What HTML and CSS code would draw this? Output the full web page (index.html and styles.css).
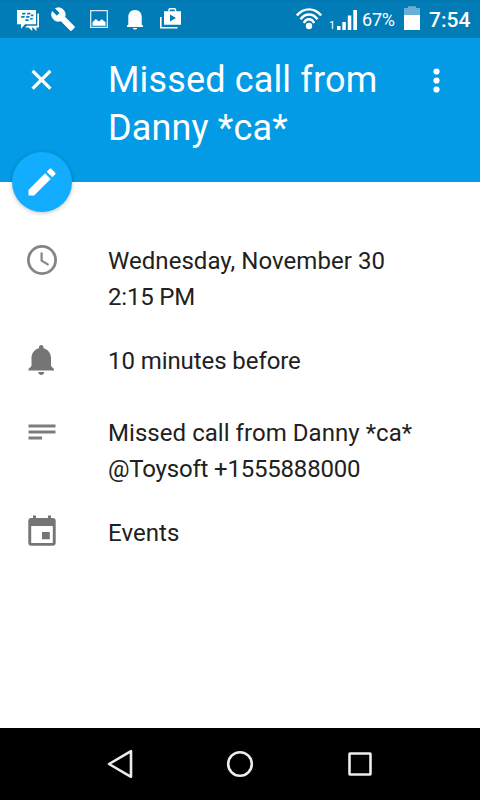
FILE: index.html
```html
<!DOCTYPE html>
<html lang="en">
<head>
    <meta charset="UTF-8">
    <meta name="viewport" content="width=device-width, initial-scale=1.0">
    <title>Missed call from Danny *ca*</title>
    <link rel="stylesheet" href="styles.css">
</head>
<body>
    <div class="screen">
        <div class="status-bar">
            <div class="notifications">
                <svg width="36" height="38" viewBox="0 0 36 38">
                    <path fill="#fff" d="M28.300 13.500h1.700V27.500h-2.500V31l-3.700-3.500h-.6V31l-3.700-3.500h-3.500l2-1.700h10.300z"/>
                    <path fill="#fff" d="M8 10h19v14.300H16L12 28.700v-4.400H8z"/>
                    <g fill="#027cb7">
                        <path d="M13.300 12.800h3.400l-.4 1.700h-3.400zM18.400 12.800h3.200l-.4 1.700h-3.200zM12.400 16h3.400l-.4 1.700H12zM17.400 16h3.200l-.4 1.700H17zM22 14.500h2.600l-.4 1.700h-2.600zM21.300 17.900h2.700l-.4 1.700h-2.700zM16.600 19.300h3.200l-.4 1.700h-3.200z"/>
                    </g>
                </svg>
                <svg width="36" height="38" viewBox="0 0 36 38">
                    <path fill="#fff" stroke="#fff" stroke-width=".8" transform="translate(5.600 6.700) scale(1.040)" d="M22.700 19l-9.100-9.100c.9-2.300.4-5-1.500-6.900-2-2-5-2.400-7.400-1.300L9 6 6 9 1.600 4.700C.4 7.100.9 10.100 2.900 12.100c1.900 1.900 4.600 2.400 6.900 1.500l9.100 9.100c.4.4 1 .4 1.400 0l2.300-2.300c.5-.4.5-1.100.1-1.400z"/>
                </svg>
                <svg width="36" height="38" viewBox="0 0 36 38">
                    <path fill="none" stroke="#d6ebf5" stroke-width="1.300" d="M9.700 10.700h16.600v16.600H9.700z"/>
                    <path fill="#fff" d="M11.500 25.700v-3.500l3.300-3.200 3 2.500 3-2.200 3.800 3v3.400z"/>
                </svg>
                <svg width="36" height="38" viewBox="0 0 36 38">
                    <path fill="#fff" d="M18 10c-4.500 0-6.700 3.300-6.700 7v7.500l-1.300 1.300v1.200h16v-1.200l-1.300-1.300V17c0-3.700-2.200-7-6.700-7zM15.800 27.900h4.400q-.4 1.600-2.200 1.600t-2.200-1.600z"/>
                </svg>
                <svg width="36" height="38" viewBox="0 0 36 38">
                    <path fill="none" stroke="#fff" stroke-width="1.500" d="M16 11.500V9.800q0-1 1-1h4.500q1 0 1 1v1.700"/>
                    <path fill="#fff" fill-rule="evenodd" d="M11 11.200h17v13.600H11zM17 14.500v7l6-3.500z"/>
                    <path fill="none" stroke="#fff" stroke-width="1.600" d="M7.800 17v10.700h16.700"/>
                </svg>
            </div>
            <div class="indicators">
                <svg class="wifi" width="26" height="38" viewBox="0 0 26 38">
                    <circle cx="13" cy="26" r="3.200" fill="#fff"/>
                    <path fill="none" stroke="#fff" stroke-width="2.400" d="M.9 15.400Q6 9.400 13 9.400t12.100 6M4.500 19.300q3.500-4.800 8.500-4.800t8.500 4.800M7.800 23q2-3.700 5.200-3.700t5.200 3.700"/>
                </svg>
                <span class="sim">1</span>
                <svg class="signal" width="20" height="38" viewBox="0 0 20 38">
                    <path fill="#fff" d="M0 26h3.500v4H0zM5.300 22h3.500v8H5.300zM10.800 15.500h3.500V30h-3.500zM16.300 10H20v20h-3.700z"/>
                </svg>
                <span class="percent">67%</span>
                <svg class="battery" width="16" height="38" viewBox="0 0 16 38">
                    <path fill="#68b0d5" d="M0 8h4V6.300h8V8h4v7H0z"/>
                    <path fill="#fff" d="M0 15h16v15H0z"/>
                </svg>
                <span class="clock">7:54</span>
            </div>
        </div>

        <div class="header">
            <svg class="close" width="36" height="36" viewBox="0 0 36 36">
                <path stroke="#fff" stroke-width="3.300" d="M8.600 8.900l17.800 17.800M26.400 8.900L8.600 26.700"/>
            </svg>
            <h1>Missed call from Danny *ca*</h1>
            <svg class="more" width="36" height="36" viewBox="0 0 36 36">
                <g fill="#fff">
                    <circle cx="18.500" cy="9.500" r="3.100"/>
                    <circle cx="18.500" cy="18.500" r="3.100"/>
                    <circle cx="18.500" cy="27.500" r="3.100"/>
                </g>
            </svg>
            <div class="fab">
                <svg width="36" height="36" viewBox="0 0 24 24">
                    <path fill="#fff" d="M3 17.250V21h3.750L17.810 9.940l-3.750-3.750L3 17.250zM20.710 7.040c.39-.39.39-1.020 0-1.410l-2.340-2.340c-.39-.39-1.020-.39-1.410 0l-1.830 1.830 3.750 3.750 1.830-1.830z"/>
                </svg>
            </div>
        </div>

        <div class="details">
            <div class="row">
                <svg width="36" height="36" viewBox="0 0 36 36">
                    <circle cx="18" cy="18" r="13.600" fill="none" stroke="#858585" stroke-width="2.800"/>
                    <path fill="none" stroke="#858585" stroke-width="2.200" d="M17.600 10.500v8.200l7 4.200"/>
                </svg>
                <p>Wednesday, November 30<br><span class="time">2:15 PM</span></p>
            </div>
            <div class="row">
                <svg width="36" height="36" viewBox="0 0 24 24">
                    <path fill="#757575" d="M11.500 22c1.100 0 2-.9 2-2h-4c0 1.100.9 2 2 2zm6.500-6v-5.500c0-3.070-2.130-5.640-5-6.320V3.500c0-.83-.67-1.500-1.500-1.500S10 2.670 10 3.500v.68c-2.870.68-5 3.250-5 6.320V16l-2 2v1h17v-1l-2-2z"/>
                </svg>
                <p class="reminder">10 minutes before</p>
            </div>
            <div class="row description">
                <svg width="36" height="36" viewBox="0 0 24 24">
                    <path fill="#7c7c7c" d="M3 7h18v2H3zM3 11h18v2H3zM3 15h9v2H3z"/>
                </svg>
                <p>Missed call from Danny *ca*<br><span class="phone">@Toysoft +1555888000</span></p>
            </div>
            <div class="row">
                <svg width="36" height="36" viewBox="0 0 36 36">
                    <path fill="#757575" fill-rule="evenodd" d="M9 1.500h3V4h12V1.500h3V4h1.700q3 0 3 3v21.700q0 3-3 3H7.300q-3 0-3-3V7q0-3 3-3H9zM7.200 12v16.900h21.600V12z"/>
                    <path fill="#757575" d="M18 18h7.800v7.300H18z"/>
                </svg>
                <p>Events</p>
            </div>
        </div>

        <div class="nav-bar">
            <svg width="120" height="72" viewBox="0 0 120 72">
                <path d="M49 36l22-12.800v25.600z"/>
            </svg>
            <svg width="120" height="72" viewBox="0 0 120 72">
                <circle cx="60" cy="36" r="11.800"/>
            </svg>
            <svg width="120" height="72" viewBox="0 0 120 72">
                <rect x="49.500" y="25.500" width="21" height="21" rx=".5"/>
            </svg>
        </div>
    </div>
</body>
</html>
```
FILE: styles.css
```css
* {
    margin: 0;
    padding: 0;
    box-sizing: border-box;
}

body {
    background: #fff;
    font-family: Roboto, "Liberation Sans", sans-serif;
}

svg {
    display: block;
    flex: none;
}

.screen {
    display: flex;
    flex-direction: column;
    width: 480px;
    height: 800px;
    overflow: hidden;
}

.status-bar {
    display: flex;
    justify-content: space-between;
    height: 38px;
    padding: 0 9px;
    background: linear-gradient(#0274ac, #027cb7 2px);
    color: #fff;
}

.notifications,
.indicators {
    display: flex;
}

.indicators {
    line-height: 38px;
}

.sim {
    margin-left: 7px;
    width: 8px;
    padding-top: 7px;
    font-size: 11px;
}

.percent {
    width: 42px;
    padding-left: 5px;
    font-size: 18px;
    letter-spacing: -0.2px;
    padding-top: 1px;
}

.battery {
    margin-left: 5px;
}

.clock {
    width: 42px;
    margin-left: 9px;
    font-size: 21px;
    font-weight: 500;
    padding-top: 1px;
}

.header {
    position: relative;
    display: flex;
    height: 144px;
    padding: 18px 24px;
    background: #039be5;
}

.close {
    margin-top: 6px;
}

.header h1 {
    width: 310px;
    margin-left: 48px;
    color: #fff;
    font-size: 36px;
    font-weight: 400;
    line-height: 48px;
    letter-spacing: 0.15px;
}

.more {
    margin-top: 6px;
}

/* edit button sits on the bottom edge of the header */
.fab {
    position: absolute;
    left: 12px;
    bottom: -30px;
    display: flex;
    align-items: center;
    justify-content: center;
    width: 60px;
    height: 60px;
    border-radius: 50%;
    background: #12adff;
    box-shadow: 0 1px 4px rgba(0, 0, 0, 0.25);
}

.details {
    flex: 1;
    padding: 61px 24px 0;
}

.row {
    display: flex;
    gap: 48px;
    margin-bottom: 28px;
}

.row svg {
    margin-top: -1px;
}

.row p {
    color: #212121;
    font-size: 24px;
    line-height: 36px;
    letter-spacing: 0.05px;
}

.row .reminder {
    letter-spacing: -0.08px;
}

.time,
.phone {
    letter-spacing: -0.2px;
}

.description {
    margin-top: 36px;
}

.nav-bar {
    display: flex;
    justify-content: center;
    height: 72px;
    background: #000;
}

.nav-bar svg {
    fill: none;
    stroke: #ececec;
    stroke-width: 2.6;
    stroke-linejoin: round;
}
```
